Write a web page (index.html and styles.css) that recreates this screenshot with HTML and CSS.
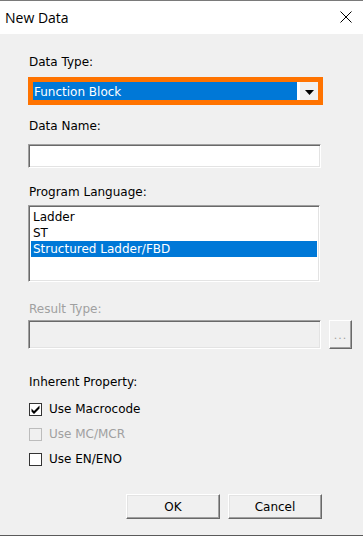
FILE: index.html
```html
<!DOCTYPE html>
<html>
<head>
<meta charset="utf-8">
<link rel="stylesheet" href="styles.css">
</head>
<body>
<div class="window">
  <div class="titlebar">
    <span class="title">New Data</span>
    <svg class="close" width="12" height="12" viewBox="0 0 12 12"><path d="M0.5 0.5 L11.5 11.5 M11.5 0.5 L0.5 11.5" stroke="#000" stroke-width="1" fill="none"/></svg>
  </div>
  <div class="content">
    <div class="label l-type">Data Type:</div>
    <div class="combo-focus">
      <div class="combo">
        <div class="combo-value">Function Block</div>
        <div class="combo-btn"><svg width="9" height="5" viewBox="0 0 9 5"><path d="M0 0 H9 L4.5 5 Z" fill="#000"/></svg></div>
      </div>
    </div>
    <div class="label l-name">Data Name:</div>
    <div class="textbox name-box"></div>
    <div class="label l-lang">Program Language:</div>
    <div class="listbox">
      <div class="item">Ladder</div>
      <div class="item">ST</div>
      <div class="item selected">Structured Ladder/FBD</div>
    </div>
    <div class="label l-result disabled">Result Type:</div>
    <div class="result-row">
      <div class="textbox result-box"></div>
      <div class="dots-btn">...</div>
    </div>
    <div class="label l-inherent">Inherent Property:</div>
    <div class="checks">
      <div class="check">
        <span class="box"><svg width="11" height="11" viewBox="0 0 11 11"><path d="M1.5 4.5 L4 7 L9.5 1.5 L9.5 4.5 L4 10 L1.5 7.5 Z" fill="#000"/></svg></span>
        <span class="check-text">Use Macrocode</span>
      </div>
      <div class="check is-disabled">
        <span class="box"></span>
        <span class="check-text">Use MC/MCR</span>
      </div>
      <div class="check">
        <span class="box"></span>
        <span class="check-text">Use EN/ENO</span>
      </div>
    </div>
    <div class="buttons">
      <div class="btn">OK</div>
      <div class="btn">Cancel</div>
    </div>
  </div>
</div>
</body>
</html>
```
FILE: styles.css
```css
html, body {
  margin: 0;
  padding: 0;
  background: #f0f0f0;
}
body {
  width: 363px;
  height: 536px;
  overflow: hidden;
  font-family: "DejaVu Sans", sans-serif;
  font-size: 12px;
  color: #000;
}
.window {
  width: 363px;
  height: 536px;
  box-sizing: border-box;
  border-top: 1px solid #7a7a7a;
  border-bottom: 1px solid #5a5a5a;
  background: #f0f0f0;
  display: flex;
  flex-direction: column;
}
.titlebar {
  height: 33px;
  background: #fff;
  display: flex;
  align-items: center;
  justify-content: space-between;
  padding: 0 11px 0 5px;
  flex-shrink: 0;
}
.title {
  font-family: "Open Sans", sans-serif;
  font-size: 14px;
  color: #000;
  margin-top: -1px;
}
.close {
  display: block;
  margin-top: -1px;
}
.content {
  flex: 1;
  padding-left: 28px;
  display: flex;
  flex-direction: column;
  align-items: flex-start;
}
.label {
  line-height: 14px;
  height: 14px;
  padding-left: 1px;
}
.disabled {
  color: #a0a0a0;
}
.l-type { margin-top: 21px; }
.combo-focus {
  margin-top: 8px;
  width: 295px;
  height: 28px;
  box-sizing: border-box;
  border: 5px solid #ff7300;
}
.combo {
  display: flex;
  height: 18px;
}
.combo-value {
  flex: 1;
  background: #0078d7;
  color: #fff;
  line-height: 18px;
  padding: 1px 0 0 1px;
  box-sizing: border-box;
  border-right: 2px solid #fff;
}
.combo-btn {
  width: 19px;
  background: #f0f0f0;
  box-sizing: border-box;
  border-left: 1px solid #fff;
  display: flex;
  align-items: center;
  justify-content: center;
}
.combo-btn svg { display: block; margin-top: 2px; }
.l-name { margin-top: 14px; }
.textbox {
  box-sizing: border-box;
  border: 1px solid;
  border-color: #a0a0a0 #fff #fff #a0a0a0;
  box-shadow: inset 1px 1px 0 #696969, inset -1px -1px 0 #e3e3e3;
  background: #fff;
}
.name-box {
  margin-top: 11px;
  width: 293px;
  height: 24px;
}
.l-lang { margin-top: 17px; }
.listbox {
  margin-top: 6px;
  width: 292px;
  height: 77px;
  box-sizing: border-box;
  border: 1px solid;
  border-color: #a0a0a0 #fff #fff #a0a0a0;
  box-shadow: inset 1px 1px 0 #696969, inset -1px -1px 0 #e3e3e3;
  background: #fff;
  padding: 3px 2px 2px 2px;
}
.item {
  line-height: 16px;
  height: 16px;
  padding-left: 2px;
}
.item.selected {
  background: #0078d7;
  color: #fff;
}
.l-result { margin-top: 20px; }
.result-row {
  margin-top: 4px;
  display: flex;
  gap: 8px;
}
.result-box {
  width: 293px;
  height: 29px;
  background: #f0f0f0;
}
.dots-btn {
  width: 23px;
  height: 29px;
  box-sizing: border-box;
  border: 1px solid;
  border-color: #fff #696969 #696969 #fff;
  box-shadow: inset -1px -1px 0 #a0a0a0;
  color: #a0a0a0;
  font-size: 11px;
  display: flex;
  align-items: center;
  justify-content: center;
  letter-spacing: 1px;
  padding-top: 2px;
}
.l-inherent { margin-top: 26px; }
.checks {
  margin-top: 14px;
  display: flex;
  flex-direction: column;
  gap: 12px;
  padding-left: 1px;
}
.check {
  display: flex;
  align-items: center;
  height: 13px;
  gap: 7px;
}
.box {
  width: 13px;
  height: 13px;
  box-sizing: border-box;
  border: 1px solid #333;
  background: #fff;
  display: flex;
  align-items: center;
  justify-content: center;
}
.box svg { display: block; }
.check-text { line-height: 13px; }
.is-disabled .box {
  border-color: #bcbcbc;
  background: #f0f0f0;
}
.is-disabled .check-text { color: #a0a0a0; }
.buttons {
  margin-top: 28px;
  align-self: stretch;
  display: flex;
  justify-content: flex-end;
  gap: 8px;
  padding-right: 41px;
}
.btn {
  width: 94px;
  height: 25px;
  box-sizing: border-box;
  border: 1px solid;
  border-color: #fff #696969 #696969 #fff;
  box-shadow: inset -1px -1px 0 #a0a0a0, inset 1px 1px 0 #e3e3e3;
  background: #f0f0f0;
  display: flex;
  align-items: center;
  justify-content: center;
  line-height: 14px;
}
```
